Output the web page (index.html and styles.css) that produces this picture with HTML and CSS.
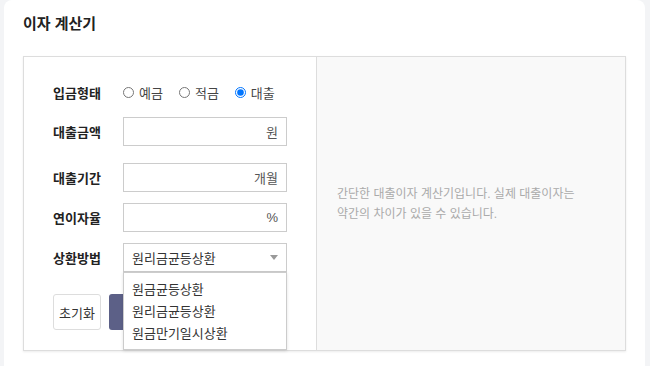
FILE: index.html
```html
<!DOCTYPE html>
<html lang="ko">
<head>
    <meta charset="UTF-8">
    <meta name="viewport" content="width=device-width, initial-scale=1.0">
    <title>이자 계산기</title>
    <link rel="stylesheet" href="styles.css">
</head>
<body>
    <div class="card">
        <h2 class="card-title">이자 계산기</h2>
        <div class="calc">
            <form class="calc-form">
                <div class="row row-type">
                    <span class="label">입금형태</span>
                    <div class="radios">
                        <label><input type="radio" name="kind" value="deposit"> 예금</label>
                        <label><input type="radio" name="kind" value="saving"> 적금</label>
                        <label><input type="radio" name="kind" value="loan" checked> 대출</label>
                    </div>
                </div>
                <div class="row row-amount">
                    <label class="label" for="amount">대출금액</label>
                    <div class="field"><input type="text" id="amount"><span class="unit">원</span></div>
                </div>
                <div class="row">
                    <label class="label" for="term">대출기간</label>
                    <div class="field"><input type="text" id="term"><span class="unit">개월</span></div>
                </div>
                <div class="row">
                    <label class="label" for="rate">연이자율</label>
                    <div class="field"><input type="text" id="rate"><span class="unit">%</span></div>
                </div>
                <div class="row row-method">
                    <span class="label">상환방법</span>
                    <div class="select">
                        <div class="select-value">원리금균등상환<span class="caret"></span></div>
                        <ul class="select-list">
                            <li>원금균등상환</li>
                            <li>원리금균등상환</li>
                            <li>원금만기일시상환</li>
                        </ul>
                    </div>
                </div>
                <div class="actions">
                    <button type="reset" class="btn-reset">초기화</button>
                    <!-- label hidden under the open dropdown -->
                    <button type="button" class="btn-calc" aria-label="계산하기"></button>
                </div>
            </form>
            <div class="calc-note">
                <p>간단한 대출이자 계산기입니다. 실제 대출이자는<br>약간의 차이가 있을 수 있습니다.</p>
            </div>
        </div>
    </div>
</body>
</html>
```

FILE: styles.css
```css
* { box-sizing: border-box; }
body { margin: 0; background: #f3f4f6; font-family: "Liberation Sans", "Noto Sans CJK KR", sans-serif; color: #222; }

.card { background: #fff; margin: 0 5px 0 4px; padding: 13px 19px 24px; border-radius: 8px; }
.card-title { margin: 0 0 21px; font-size: 15px; line-height: 22px; font-weight: 700; color: #222; }

.calc { display: flex; border: 1px solid #ddd; box-shadow: 0 1px 2px rgba(0, 0, 0, 0.08); }
.calc-form { width: 293px; padding: 25px 0 20px 29px; border-right: 1px solid #ddd; background: #fff; margin: 0; }
.calc-note { flex: 1; display: flex; align-items: center; padding: 0 20px; background: #f9f9f9; }
.calc-note p { margin: 0; font-size: 12px; line-height: 20px; color: #aaa; }

.row { display: flex; align-items: center; margin-bottom: 11px; }
.row-type { height: 20px; margin-bottom: 15px; }
.row-amount { margin-bottom: 17px; }
.row-method { margin-bottom: 22px; }
.label { width: 70px; font-size: 13px; font-weight: 700; color: #222; }

.radios { display: flex; gap: 16px; font-size: 13px; color: #444; }
.radios label { display: flex; align-items: center; gap: 5px; }
.radios input { width: 11px; height: 11px; margin: 0; }

.field { display: flex; align-items: center; width: 164px; height: 29px; border: 1px solid #ccc; background: #fff; }
.field input { flex: 1; min-width: 0; height: 100%; border: none; outline: none; padding: 0 6px; font: inherit; }
.unit { padding-right: 8px; font-size: 13px; color: #555; }

.select { position: relative; width: 164px; }
.select-value { display: flex; align-items: center; justify-content: space-between; height: 29px; padding: 0 8px 0 8px; border: 1px solid #ccc; font-size: 13px; color: #333; }
.caret { width: 0; height: 0; border-left: 4px solid transparent; border-right: 4px solid transparent; border-top: 5px solid #999; }
.select-list { position: absolute; left: 0; top: 29px; width: 164px; margin: 0; padding: 6px 0 4px; list-style: none; background: #fff; border: 1px solid #ccc; box-shadow: 0 1px 3px rgba(0, 0, 0, 0.12); z-index: 2; }
.select-list li { height: 22px; line-height: 22px; padding-left: 8px; font-size: 13px; color: #333; }

.actions { display: flex; gap: 8px; }
.actions button { height: 36px; font: inherit; font-size: 13px; border-radius: 3px; }
.btn-reset { width: 48px; padding: 0; background: #fff; border: 1px solid #ddd; color: #333; }
.btn-calc { width: 178px; background: #5c6087; border: none; color: #fff; }
```
